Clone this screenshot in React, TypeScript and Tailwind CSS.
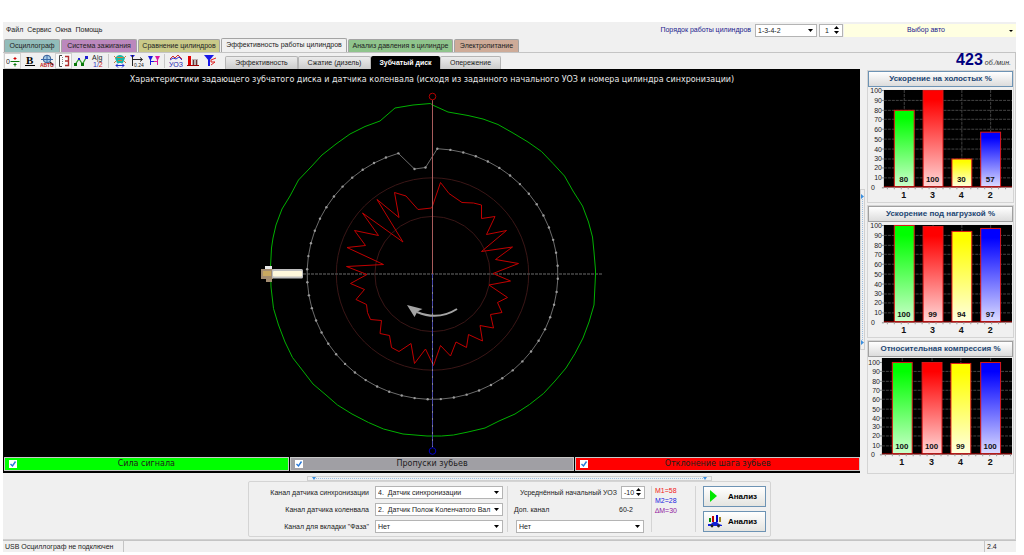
import { useState, type ReactNode } from "react";
import clsx from "clsx";

type Bar = { cylinder: string; value: number; x: number };

const menuItems = ["Файл", "Сервис", "Окна", "Помощь"];

const mainTabs = [
  { name: "Осциллограф", style: "w-[56px] bg-[#92bcba]" },
  { name: "Система зажигания", style: "w-[76px] bg-[#bb88bd]" },
  { name: "Сравнение цилиндров", style: "w-[82px] bg-[#c9c988]" },
  { name: "Эффективность работы цилиндров", style: "w-[126px] bg-[#f0f0f0]" },
  { name: "Анализ давления в цилиндре", style: "w-[105px] bg-[#8fc48c]" },
  { name: "Электропитание", style: "w-[65px] bg-[#ceab98]" },
];

const subTabs = [
  { name: "Эффективность", style: "w-[73px]" },
  { name: "Сжатие (дизель)", style: "w-[73px]" },
  { name: "Зубчатый диск", style: "w-[69px]" },
  { name: "Опережение", style: "w-[61px]" },
];

const colors = [
  { from: "#00ff00", to: "#ccffcc" },
  { from: "#ff0000", to: "#ffd8d8" },
  { from: "#ffff00", to: "#ffffe0" },
  { from: "#0000ff", to: "#dcdcff" },
];

const idleBars: Bar[] = [
  { cylinder: "1", value: 80, x: 26 },
  { cylinder: "3", value: 100, x: 55 },
  { cylinder: "4", value: 30, x: 84 },
  { cylinder: "2", value: 57, x: 113 },
];
const loadBars: Bar[] = [
  { cylinder: "1", value: 100, x: 26 },
  { cylinder: "3", value: 99, x: 55 },
  { cylinder: "4", value: 94, x: 84 },
  { cylinder: "2", value: 97, x: 113 },
];
const compressionBars: Bar[] = [
  { cylinder: "1", value: 100, x: 24 },
  { cylinder: "3", value: 100, x: 54 },
  { cylinder: "4", value: 99, x: 83 },
  { cylinder: "2", value: 100, x: 113 },
];

// Центр диска
const CX = 432.5;
const CY = 274;

const signalPoints =
  "270.5,267 271.5,248 273,238 276,225 282,209 290,196 298.5,180 310,168 322,155 336,144 350,134 365,126.5 380,121 395,108 413,105 430.5,103.5 " +
  "432.5,105 448,112 468,115.5 483,119 498,124.5 513,133 528,142 541.5,151.5 553,163.5 564.5,176 573,191 582.5,206 588.5,222 592.5,237 594,252 595.5,270 " +
  "595.5,275 594,305 589,322 583,338 575,353.5 566,368 555,381 543.5,393.5 529.5,404.5 515,414 499,421 485,428 468,432 453.5,435 441.5,436 427,436 " +
  "403,434 383.5,429 368.5,422.5 352,414 337.5,405 326,395 313,384 303,371 292.5,357.5 285,342 278.5,325 273.5,308.5 271,287";

const deviationPoints =
  "432.5,206 440.5,182.5 449,193.5 462,202.5 473.5,203 481.5,205 481.5,218.5 495,216.5 486.5,234.5 506.5,230.5 481.5,251.5 512.5,247 495.5,259.5 518.5,263.5 493,273.5 510.5,281 " +
  "489,285 507.5,297.5 497.5,302.5 502,312.5 490.5,314.5 493.5,328 480,325.5 482.5,341 468.5,334.5 466.5,347.5 456,342 450.5,356 440.5,345.5 433.5,365.5 " +
  "425.5,349 414.5,363.5 411,343.5 399,351.5 391.5,347.5 389.5,335.5 380,333.5 381.5,320.5 370.5,319.5 367.5,312.5 366.5,304.5 356,299.5 364.5,289.5 350.5,283.5 367,274.5 " +
  "346.5,266.5 383.5,264.5 347,247.5 365.5,245.5 354.5,230.5 378.5,235.5 362.5,213 403,242 377,199.5 399,217.5 394.5,192.5 406,196 418,209.5 431.5,208";

// 58 зубьев через 6 градусов и два пропущенных
const teeth = Array.from({ length: 58 }, (_, i) => {
  const a = ((2.2 + i * 6) * Math.PI) / 180;
  return [CX + 125.4 * Math.sin(a), CY - 125.4 * Math.cos(a)];
}).concat([
  [414.5, 169],
  [425.5, 167.5],
]);

function GearDisk() {
  return (
    <svg viewBox="4 89 856 368" className="block h-[368px] w-full" role="img" aria-label="Зубчатый диск">
      <g fill="none">
        <circle cx={CX} cy={CY} r="96.2" stroke="#3a1616" />
        <circle cx={CX} cy={CY} r="57.6" stroke="#3a1616" />
        <path d="M303 274H602" stroke="#484848" strokeWidth="1.5" strokeDasharray="3 1" />
        <polygon points={teeth.map((p) => p.join(",")).join(" ")} stroke="#6c6c6c" />
        <polygon points={signalPoints} stroke="#00b000" />
        <polygon points={deviationPoints} stroke="#c00000" />
        <path d="M432.5 100V274" stroke="#a85c5c" />
        <path d="M432.5 274V447" stroke="#4646a8" />
        <path d="M432.5 278V447" stroke="#8080a0" strokeDasharray="2 5" />
        <circle cx="432.5" cy="96.5" r="3.3" stroke="#b00000" />
        <circle cx="432.5" cy="451" r="3.3" stroke="#0000c8" />
        <path d="M417 312Q438 321 457 309" stroke="#a4a4a4" strokeWidth="2" />
      </g>
      {teeth.map(([x, y], i) => (
        <circle key={i} cx={x} cy={y} r="1.2" fill="#9a9a9a" />
      ))}
      <path d="M407 305L422.5 309L417.5 311.5L414.5 317Z" fill="#a4a4a4" />
      {/* Датчик коленвала */}
      <path d="M265 266H272V269H265Z" fill="#e8e8e8" />
      <path d="M261 269H273V279H272V282H266V279H261Z" fill="#a38c70" />
      <path d="M263 271H271V276H263Z" fill="#c8a860" />
      <rect x="272" y="269" width="31" height="9.5" rx="1.5" fill="#c0c0c0" />
      <rect x="273" y="271" width="29" height="5.5" rx="1" fill="#fff8dc" />
    </svg>
  );
}

function BarChart({ id, title, bars, left = 16, top = 3, full = 3, bottom = 101, active = false }: {
  id: string;
  title: string;
  bars: Bar[];
  left?: number;
  top?: number;
  full?: number;
  bottom?: number;
  active?: boolean;
}) {
  const step = (bottom - full) / 10;
  return (
    <section className="border border-[#d4d4d4] bg-[#f0f0f0]">
      <button
        className={clsx(
          "block h-4 w-full border bg-linear-to-b from-white to-[#dcdcdc] text-[8px] leading-3 font-bold text-[#1c4672]",
          active ? "border-[#6d93b4]" : "border-[#a0a0a0]"
        )}
      >
        {title}
      </button>
      <svg viewBox="0 0 146 116" className="block w-full font-['Liberation_Sans',sans-serif]">
        <defs>
          {colors.map((c, i) => (
            <linearGradient key={i} id={`${id}-${i}`} x1="0" y1="0" x2="0" y2="1">
              <stop offset="0.1" stopColor={c.from} />
              <stop offset="1" stopColor={c.to} />
            </linearGradient>
          ))}
        </defs>
        <rect x={left} y={top} width={145 - left} height={bottom - top} fill="#000" />
        {Array.from({ length: 11 }, (_, i) => {
          const y = Math.round(full + i * step);
          return (
            <g key={i}>
              {i > 0 && i < 10 && <path d={`M${left} ${y + 0.5}H145`} stroke="#444" strokeDasharray="3 1" />}
              <path d={`M${left - 2} ${y + 0.5}H${left}`} stroke="#888" />
              <text x={i === 10 ? 7 : left - 2} y={y + 3} textAnchor="end" fontSize="7" fill="#222">
                {100 - i * 10}
              </text>
            </g>
          );
        })}
        {bars.map((bar, i) => {
          const y = Math.round(bottom - (bar.value * (bottom - full)) / 100);
          return (
            <g key={bar.cylinder}>
              <path d={`M${bar.x + 10.5} ${top}V${bottom}`} stroke="#444" strokeDasharray="3 1" />
              <rect x={bar.x + 0.5} y={y + 0.5} width="20" height={bottom - y - 1} fill={`url(#${id}-${i})`} stroke="#e01818" />
              <text x={bar.x + 10} y={bottom - 5} textAnchor="middle" fontSize="8" fontWeight="bold" fill="#111">
                {bar.value}
              </text>
              <text x={bar.x + 10} y={bottom + 11} textAnchor="middle" fontSize="9" fontWeight="bold" fill="#111">
                {bar.cylinder}
              </text>
            </g>
          );
        })}
        <path d={`M${left} ${bottom - 0.5}H145`} stroke="#a00000" />
        <path d={`M${left + 3} ${bottom + 1}H145`} stroke="#999" strokeWidth="2" strokeDasharray="1 6" />
      </svg>
    </section>
  );
}

function Select({ id, options, className, label }: { id: string; options: string[]; className: string; label?: string }) {
  return (
    <div className={clsx("relative", className)}>
      <select
        id={id}
        aria-label={label}
        className="block h-[13px] w-full appearance-none border border-[#b4b4b4] bg-white pl-0.5 text-[7px] leading-[11px] text-[#222]"
      >
        {options.map((o) => (
          <option key={o}>{o}</option>
        ))}
      </select>
      <svg viewBox="0 0 5 3" className="pointer-events-none absolute top-[5px] right-1 h-[3px] w-[5px]">
        <path d="M0 0H5L2.5 3Z" />
      </svg>
    </div>
  );
}

function Spinner({ id, initial, label }: { id: string; initial: number; label?: string }) {
  const [value, setValue] = useState(initial);
  return (
    <div className="flex h-[13px] w-6 items-center border border-[#b4b4b4] bg-white">
      <input
        id={id}
        aria-label={label}
        value={value}
        onChange={(e) => setValue(Number(e.target.value) || 0)}
        className="w-[14px] min-w-0 text-center text-[7px] leading-[11px] text-[#222] outline-none"
      />
      <div className="flex flex-col gap-0.5">
        <button aria-label="Больше" onClick={() => setValue(value + 1)}>
          <svg viewBox="0 0 5 3" className="block h-[3px] w-[5px]"><path d="M0 3H5L2.5 0Z" /></svg>
        </button>
        <button aria-label="Меньше" onClick={() => setValue(value - 1)}>
          <svg viewBox="0 0 5 3" className="block h-[3px] w-[5px]"><path d="M0 0H5L2.5 3Z" /></svg>
        </button>
      </div>
    </div>
  );
}

function Tool({ name, children, pressed }: { name: string; children?: ReactNode; pressed?: boolean }) {
  return (
    <button
      aria-label={name}
      className={clsx("flex h-4 w-[17px] items-center justify-center", pressed && "border border-[#d0d0d0] bg-[#fafafa]")}
    >
      <svg viewBox="0 0 14 14" className="h-[14px] w-[14px] shrink-0 font-['Liberation_Sans',sans-serif]" fill="none">
        {children}
      </svg>
    </button>
  );
}

function Toolbar() {
  return (
    <div className="flex items-center">
      <Tool name="Ноль" pressed>
        <text x="0" y="10" fontSize="7" fill="#222">0</text>
        <path d="M4.5 7.5H13.5" stroke="#087808" />
        <path d="M9 3V6M7.5 4.5H10.5" stroke="#d00000" />
        <path d="M9 9V12.5M7.5 10.5H10.5" stroke="#087808" />
      </Tool>
      <Tool name="Жирный">
        <text x="3" y="10" fontSize="11" fontWeight="bold" fill="#000" className="font-['Liberation_Serif',serif]">B</text>
        <path d="M2 11.5H12" stroke="#000" />
      </Tool>
      <Tool name="Лупа">
        <circle cx="7" cy="5" r="3.8" fill="#a8cce8" stroke="#305890" />
        <path d="M1 5.5H13M7 1V9" stroke="#3868a8" />
        <path d="M10 8L13 11" stroke="#222" strokeWidth="1.5" />
        <text x="0" y="13" fontSize="5" fontWeight="bold" fill="#c02020">АВТО</text>
      </Tool>
      <Tool name="Шкала" pressed>
        <path d="M5 1.5H2.5V12.5H5" stroke="#444" />
        <path d="M5.5 3V11" stroke="#888" strokeDasharray="1 1" />
        <path d="M8 2.5H11.5V11.5H8M8 7H11.5" stroke="#b03030" strokeWidth="1.4" />
      </Tool>
      <Tool name="Точки">
        <path d="M1.5 10L5 5L8.5 10L12.5 3" stroke="#30a030" strokeWidth="1.3" />
        <path d="M0 9H3V12H0ZM7 9H10V12H7Z" fill="#087808" />
        <path d="M4 4H6V6H4ZM11 2H14V5H11Z" fill="#2020d0" />
      </Tool>
      <Tool name="Подписи">
        <text x="1" y="6" fontSize="7" fill="#222">A|g</text>
        <text x="2" y="13" fontSize="7" fill="#3030c0">1/<tspan fill="#d02020">2</tspan></text>
      </Tool>
      <div className="mx-0.5 h-[14px] w-px bg-[#c8c8c8]" />
      <Tool name="Диск">
        <path d="M4 2Q7 0 10 2L12 4L10 9H4L2 4Z" fill="#18b8a8" />
        <path d="M1 2L3 4M13 2L11 4M1 9L3 7M13 9L11 7M4 3.5H10M5 6.5H9" stroke="#d07838" />
        <path d="M3 11.5H11M5 9.5L3 11.5L5 13.5M9 9.5L11 11.5L9 13.5" stroke="#2030d0" />
      </Tool>
      <Tool name="Интервал">
        <path d="M0 1H5L2.5 4Z" fill="#1818e0" />
        <path d="M2.5 1V12M3 5.5H12M10 3.5L12.5 5.5L10 7.5" stroke="#222" />
        <text x="4" y="13" fontSize="5" fill="#222">0.24</text>
      </Tool>
      <Tool name="Маркеры">
        <path d="M1 2H6L4 6V11H3V6Z" fill="#1818e0" />
        <path d="M8 2H13L11 6V11H10V6Z" fill="#e018a0" />
        <path d="M4 7.5H7" stroke="#1818e0" />
        <path d="M7 7.5H10" stroke="#e018a0" />
      </Tool>
      <div className="mx-0.5 h-[14px] w-px bg-[#c8c8c8]" />
      <Tool name="УОЗ">
        <path d="M1 5L4 2L6 4L9 1L13 5" stroke="#d03030" />
        <path d="M1 6L4 4L7 5L10 3L13 6" stroke="#3030d0" />
        <text x="0" y="13" fontSize="7" fill="#2020b0">УОЗ</text>
      </Tool>
      <Tool name="Столбцы">
        <path d="M2 2H5V11H2Z" fill="#e00000" />
        <path d="M6 5H12V11H6Z" fill="#b8b0b0" />
        <path d="M7.5 6V11M10.5 6V11" stroke="#703030" />
        <path d="M1 11.5H13" stroke="#a00000" />
      </Tool>
      <Tool name="Фильтр">
        <path d="M1 1H11L6 7Z" fill="#1818e8" />
        <path d="M6 6V12" stroke="#1818e8" strokeWidth="2" />
        <path d="M13 4L8 6V8H12L8 11" stroke="#e02020" />
      </Tool>
    </div>
  );
}

function ChannelStrip({ label, color }: { label: string; color: string }) {
  const [on, setOn] = useState(true);
  return (
    <label className={clsx("relative flex h-[14px] items-center justify-center border border-[#c8c8c8] font-['DejaVu_Sans',sans-serif] text-[8px] leading-3 text-[#20201c]", color)}>
      <input type="checkbox" checked={on} onChange={() => setOn(!on)} className="absolute left-1 size-2 appearance-none bg-white" />
      {on && (
        <svg viewBox="0 0 8 8" className="pointer-events-none absolute left-1 size-2" fill="none">
          <path d="M1.5 4L3.5 6L6.5 1.5" stroke="#2878d8" strokeWidth="1.4" />
        </svg>
      )}
      {label}
    </label>
  );
}

function Settings() {
  return (
    <div className="mr-[244px] ml-auto flex h-14 w-[523px] rounded-[2px] border border-[#d4d4d4] py-1 pr-1 pl-5 text-[7px] leading-[13px] text-[#222]">
      <div className="grid grid-cols-[100px_128px] items-center gap-x-1.5 gap-y-1 text-right">
        <label htmlFor="sync" className="whitespace-nowrap">Канал датчика синхронизации</label>
        <Select id="sync" className="w-full" options={["4.\u00a0 Датчик синхронизации"]} />
        <label htmlFor="crank">Канал датчика коленвала</label>
        <Select id="crank" className="w-full" options={["2.\u00a0 Датчик Полож Коленчатого Вал"]} />
        <label htmlFor="phase">Канал для вкладки "Фаза"</label>
        <Select id="phase" className="w-full" options={["Нет"]} />
      </div>
      <div className="ml-1 w-px bg-[#d4d4d4]" />
      <div className="flex w-[143px] flex-col gap-1 px-1.5">
        <div className="flex items-center justify-end gap-1">
          <label htmlFor="uoz" className="whitespace-nowrap">Усреднённый начальный УОЗ</label>
          <Spinner id="uoz" initial={-10} />
        </div>
        <div className="flex justify-between pr-3">
          <label htmlFor="extra">Доп. канал</label>
          <span>60-2</span>
        </div>
        <Select id="extra" className="ml-0.5 w-[128px]" options={["Нет"]} />
      </div>
      <div className="w-px bg-[#d4d4d4]" />
      <div className="w-[43px] pl-[3px] leading-[10px]">
        <p className="text-[#f02020]">M1=58</p>
        <p className="text-[#2020e0]">M2=28</p>
        <p className="text-[#9020a0]">∆M=30</p>
      </div>
      <div className="w-px bg-[#d4d4d4]" />
      <div className="ml-[7px] flex flex-1 flex-col gap-1 text-[8px] font-bold">
        <button className="flex h-[22px] items-center gap-1.5 border border-[#6d93b4] bg-linear-to-b from-white to-[#e4e4e0] pl-1 text-black">
          <svg viewBox="0 0 14 14" className="size-[14px]"><path d="M2 1V13L9 7Z" fill="#00e800" /></svg>
          Анализ
        </button>
        <button className="flex h-[22px] items-center gap-1.5 border border-[#6d93b4] bg-linear-to-b from-white to-[#e4e4e0] pl-1 text-black">
          <svg viewBox="0 0 14 14" className="size-[14px]">
            <path d="M1 4H3V8H1Z" fill="#009000" />
            <path d="M4 2H6V8H4Z" fill="#c00000" />
            <path d="M8 1H10V8H8Z" fill="#0000c0" />
            <path d="M11 3H13V8H11Z" fill="#a08020" />
            <path d="M0 10H3L5 8H9L11 10L14 11V12H0Z" fill="#1020d8" />
            <circle cx="4" cy="12" r="1.4" fill="#222" />
            <circle cx="10.5" cy="12" r="1.4" fill="#222" />
          </svg>
          Анализ
        </button>
      </div>
    </div>
  );
}

export default function App() {
  const [tab, setTab] = useState("Эффективность работы цилиндров");
  const [subTab, setSubTab] = useState("Зубчатый диск");

  return (
    <div className="min-h-screen bg-white pt-[22px] pr-2 pb-[3px] pl-[3px] font-['Liberation_Sans',Arial,sans-serif]">
      <div className="bg-[#f0f0f0]">
        <header className="flex h-4 items-center justify-between text-[7px] leading-3 text-[#222]">
          <nav className="flex gap-1 pl-[3px]">
            {menuItems.map((item) => (
              <button key={item}>{item}</button>
            ))}
          </nav>
          <div className="flex items-center">
            <label htmlFor="order" className="mr-1 text-[#20208c]">Порядок работы цилиндров</label>
            <Select id="order" className="mr-0.5 w-[62px]" options={["1-3-4-2"]} />
            <Spinner id="cylinder" initial={1} label="Цилиндр" />
            <button className="relative ml-px h-[13px] w-[172px] bg-[#ffffe1] pr-2 text-[#20208c]">
              Выбор авто
              <svg viewBox="0 0 4 2" className="absolute top-[6px] right-[3px] h-0.5 w-1"><path d="M0 0H4L2 2Z" /></svg>
            </button>
          </div>
        </header>

        <div className="flex items-end pl-px" role="tablist">
          {mainTabs.map((t) => (
            <button
              key={t.name}
              role="tab"
              aria-selected={tab === t.name}
              onClick={() => setTab(t.name)}
              className={clsx(
                "mr-px rounded-t-[2px] border border-b-0 border-[#a4a4a4] text-[7px] leading-3 whitespace-nowrap text-[#222]",
                tab === t.name ? "h-[14px] pb-px" : "h-[13px]",
                t.style
              )}
            >
              {t.name}
            </button>
          ))}
        </div>

        <div className="flex h-[17px] items-center border-t border-r border-[#c4c4c4] pl-px">
          <Toolbar />
          <div className="ml-[7px] flex self-end" role="tablist">
            {subTabs.map((t) => (
              <button
                key={t.name}
                role="tab"
                aria-selected={subTab === t.name}
                onClick={() => setSubTab(t.name)}
                className={clsx(
                  "h-[13px] rounded-t-[2px] text-[7px] leading-3 whitespace-nowrap",
                  subTab === t.name
                    ? "bg-black font-bold text-white"
                    : "border border-b-0 border-[#b4b4b4] bg-linear-to-b from-[#ececec] to-[#cccccc] text-[#222]",
                  t.style
                )}
              >
                {t.name}
              </button>
            ))}
          </div>
          <p className="ml-auto flex items-baseline gap-0.5 pr-1 text-[7px] leading-4 text-[#333] italic">
            <strong className="text-[16px] text-[#000080] not-italic">423</strong>
            об./мин.
          </p>
        </div>

        <main className="flex border-r border-[#d0d0d0]">
          <div className="min-w-0 flex-1">
            <div className="bg-black pl-px">
              <h1 className="h-5 pt-1 text-center font-['DejaVu_Sans',sans-serif] text-[8px] leading-[14px] whitespace-nowrap text-[#e8e8e8]">
                Характеристики задающего зубчатого диска и датчика коленвала (исходя из заданного начального УОЗ и номера цилиндра синхронизации)
              </h1>
              <GearDisk />
              <div className="grid grid-cols-3 gap-px pb-0.5">
                <ChannelStrip label="Сила сигнала" color="bg-[#00ff00]" />
                <ChannelStrip label="Пропуски зубьев" color="bg-[#a09fa4]" />
                <ChannelStrip label="Отклонение шага зубьев" color="bg-[#ff0000]" />
              </div>
            </div>
          </div>
          <div className="flex w-[7px] flex-col items-start justify-center pb-1">
            <div className="flex h-[161px] w-[5px] flex-col items-center justify-between border border-[#d0d0d0] py-1 text-[#3c90e0]">
              <svg viewBox="0 0 3 5" className="h-[5px] w-[3px] fill-current"><path d="M0 0V5L3 2.5Z" /></svg>
              <div className="w-px flex-1 border-l border-dotted border-[#9cc0e4]" />
              <svg viewBox="0 0 3 5" className="h-[5px] w-[3px] fill-current"><path d="M0 0V5L3 2.5Z" /></svg>
            </div>
          </div>
          <aside className="flex w-[148px] flex-col gap-0.5 pt-px pr-px">
            <BarChart id="idle" title="Ускорение на холостых %" bars={idleBars} active />
            <BarChart id="load" title="Ускорение под нагрузкой %" bars={loadBars} />
            <BarChart id="compression" title="Относительная компрессия %" bars={compressionBars} left={14} top={1} full={5} bottom={98} />
          </aside>
        </main>

        <div className="border-r border-b border-[#d0d0d0] pt-0.5 pb-0.5">
          <div className="mr-[303px] ml-auto flex h-[5px] w-[405px] items-center justify-between border border-[#d0d0d0] px-1 text-[#3c90e0]">
            <svg viewBox="0 0 4 3" className="h-[3px] w-1 fill-current"><path d="M0 0H4L2 3Z" /></svg>
            <div className="flex-1 border-t border-dotted border-[#9cc0e4]" />
            <svg viewBox="0 0 4 3" className="h-[3px] w-1 fill-current"><path d="M0 0H4L2 3Z" /></svg>
          </div>
          <Settings />
        </div>

        <footer className="flex h-3 border-t border-[#c4c4c4] text-[7px] leading-[11px] text-[#222]">
          <span className="w-[121px] border-r border-[#c4c4c4] pl-0.5 whitespace-nowrap">USB Осциллограф не подключен</span>
          <span className="ml-auto w-8 border-l border-[#c4c4c4] pl-0.5">2.4</span>
        </footer>
      </div>
    </div>
  );
}
